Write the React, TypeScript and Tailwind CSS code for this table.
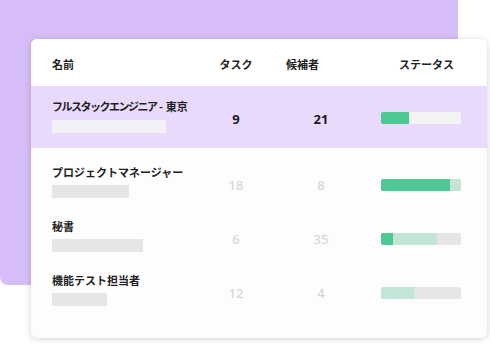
import React from "react";

type Seg = { w: number; c: string };
type Row = {
  name: React.ReactNode;
  nameBar: number;
  task: string;
  cand: string;
  segs: Seg[];
  track: string;
  highlight?: boolean;
};

const GREEN = "#4cc892";
const MINT = "#c2e5d6";
const GRAY = "#e6e6e6";

const rows: Row[] = [
  {
    name: (
      <>
        <span className="tracking-[-1.5px]">フルスタックエンジニア</span>
        <span className="font-['Noto_Sans',sans-serif]"> - </span>
        <span>東京</span>
      </>
    ),
    nameBar: 114,
    task: "9",
    cand: "21",
    segs: [{ w: 28, c: GREEN }],
    track: "#f3f3f3",
    highlight: true,
  },
  {
    name: "プロジェクトマネージャー",
    nameBar: 77,
    task: "18",
    cand: "8",
    segs: [
      { w: 69, c: GREEN },
      { w: 11, c: MINT },
    ],
    track: GRAY,
  },
  {
    name: "秘書",
    nameBar: 91,
    task: "6",
    cand: "35",
    segs: [
      { w: 12, c: GREEN },
      { w: 44, c: MINT },
    ],
    track: GRAY,
  },
  {
    name: "機能テスト担当者",
    nameBar: 55,
    task: "12",
    cand: "4",
    segs: [{ w: 33, c: MINT }],
    track: GRAY,
  },
];

const jp = "font-['Noto_Sans_CJK_JP','Noto_Sans',sans-serif]";
const num = "font-['Noto_Sans','Noto_Sans_CJK_JP',sans-serif]";

function StatusBar({ segs, track }: { segs: Seg[]; track: string }) {
  return (
    <div
      className="flex h-[12px] w-[80px] overflow-hidden rounded-[2px]"
      style={{ backgroundColor: track }}
    >
      {segs.map((s, i) => (
        <div key={i} className="h-full" style={{ width: s.w, backgroundColor: s.c }} />
      ))}
    </div>
  );
}

export default function App() {
  return (
    <div className="relative h-[344px] w-[490px] overflow-hidden bg-white">
      <div className="absolute left-0 top-[-12px] h-[297px] w-[458px] rounded-tr-[12px] rounded-bl-[8px] bg-[#d6bdf8]" />
      <div className="relative pl-[31px] pt-[39px]">
        <div className="h-[299px] w-[456px] overflow-hidden rounded-[6px] bg-[#fdfdfd] shadow-[0_1px_6px_rgba(0,0,0,0.18)]">
          <div
            className={`grid h-[47px] grid-cols-[148px_72px_98px_1fr] items-center bg-white pl-[21px] pt-[3px] text-[11px] font-semibold leading-[16px] text-[#1f1f24] ${jp}`}
          >
            <div>名前</div>
            <div className="text-center">タスク</div>
            <div className="pl-[14px]">候補者</div>
            <div className="pl-[29px]">ステータス</div>
          </div>
          {rows.map((r, i) => {
            const first = !!r.highlight;
            return (
              <div
                key={i}
                className={`grid grid-cols-[148px_72px_98px_1fr] items-start pl-[21px] ${
                  first ? "h-[62px] bg-[#e9dafb] pt-[12px]" : "h-[54px] pt-[16px]"
                }`}
              >
                <div className="flex flex-col">
                  <div
                    className={`whitespace-nowrap text-[11px] font-semibold leading-[16px] text-[#1f1f24] ${jp}`}
                  >
                    {r.name}
                  </div>
                  <div
                    className={`mt-[5px] h-[13px] ${first ? "bg-[#f4f0f7]" : "bg-[#e6e6e6]"}`}
                    style={{ width: r.nameBar }}
                  />
                </div>
                <div
                  className={`mt-[13px] text-center text-[13px] leading-[16px] ${num} ${
                    first ? "font-bold text-[#1a1a26]" : "font-medium text-[#d6d6d6]"
                  }`}
                >
                  {r.task}
                </div>
                <div
                  className={`mt-[13px] text-center text-[13px] leading-[16px] ${num} ${
                    first ? "font-bold text-[#1a1a26]" : "font-medium text-[#d6d6d6]"
                  }`}
                >
                  {r.cand}
                </div>
                <div className={`pl-[11px] ${first ? "mt-[14px]" : "mt-[15px]"}`}>
                  <StatusBar segs={r.segs} track={r.track} />
                </div>
              </div>
            );
          })}
        </div>
      </div>
    </div>
  );
}
